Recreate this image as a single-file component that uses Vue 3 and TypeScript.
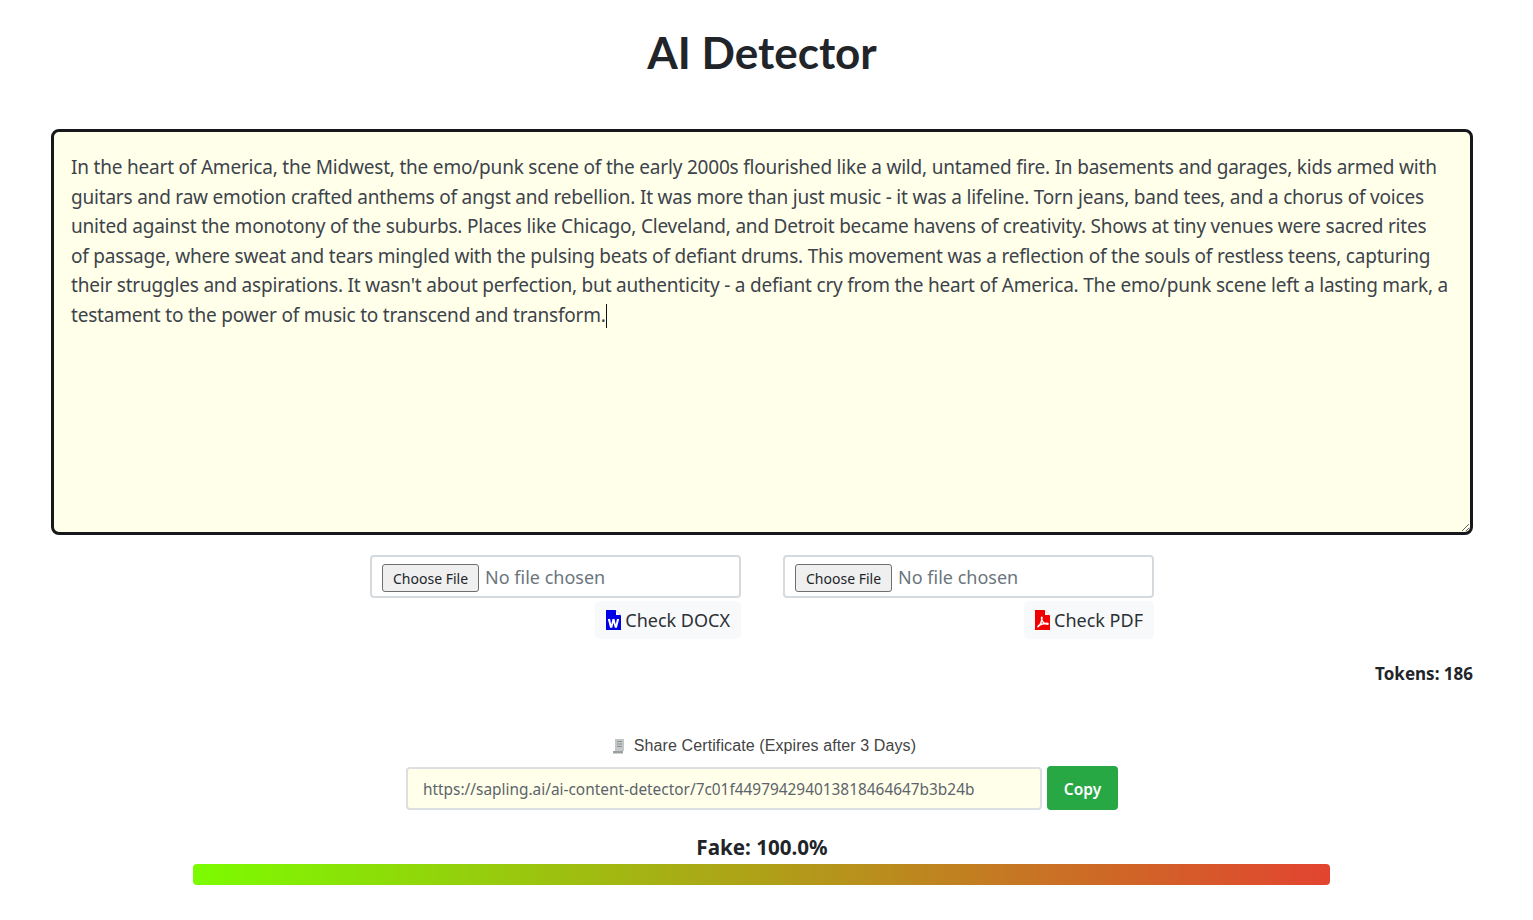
<script setup lang="ts">
const lines: string[] = [
  'In the heart of America, the Midwest, the emo/punk scene of the early 2000s flourished like a wild, untamed fire. In basements and garages, kids armed with',
  'guitars and raw emotion crafted anthems of angst and rebellion. It was more than just music - it was a lifeline. Torn jeans, band tees, and a chorus of voices',
  'united against the monotony of the suburbs. Places like Chicago, Cleveland, and Detroit became havens of creativity. Shows at tiny venues were sacred rites',
  'of passage, where sweat and tears mingled with the pulsing beats of defiant drums. This movement was a reflection of the souls of restless teens, capturing',
  "their struggles and aspirations. It wasn't about perfection, but authenticity - a defiant cry from the heart of America. The emo/punk scene left a lasting mark, a",
  'testament to the power of music to transcend and transform.'
]
const lastLine = lines.length - 1
const shareUrl = 'https://sapling.ai/ai-content-detector/7c01f449794294013818464647b3b24b'
</script>

<template>
  <div class="page">
    <h1 class="title">AI Detector</h1>

    <div class="editor">
      <div v-for="(line, i) in lines" :key="i" class="line">{{ line }}<span v-if="i === lastLine" class="caret"></span></div>
    </div>

    <div class="uploads">
      <div class="upload">
        <input class="file" type="file" />
        <button class="check" type="button">
          <svg class="icon" viewBox="0 0 15 20" width="15" height="20">
            <path d="M0 0H9.500L15 5.500V20H0Z" fill="#0000e6" />
            <path d="M10 0.500L14.500 5H10Z" fill="#fff" />
            <path d="M1.800 9H4.100L5.200 14.400L6.500 9H8.500L9.800 14.400L10.900 9H13.200L10.900 17.800H8.800L7.500 12.800L6.200 17.800H4.100Z" fill="#fff" />
          </svg>
          Check DOCX
        </button>
      </div>
      <div class="upload">
        <input class="file" type="file" />
        <button class="check" type="button">
          <svg class="icon" viewBox="0 0 15 20" width="15" height="20">
            <path d="M0 0H9.500L15 5.500V20H0Z" fill="#f00000" />
            <path d="M10 0.500L14.500 5H10Z" fill="#fff" />
            <path d="M2.400 17.200C4.600 16 6.600 12 7 8C7.200 7 6.400 7 6.500 8.400C6.800 11.600 9.400 14 12.600 14.200C13.400 14.200 13.200 13.200 12 13.200C9 13.200 5.400 14.200 3 16" fill="none" stroke="#fff" stroke-width="1.500" />
          </svg>
          Check PDF
        </button>
      </div>
    </div>

    <div class="tokens">Tokens: 186</div>

    <div class="share">
      <div class="share-label">
        <svg class="scroll" viewBox="0 0 14 16" width="14" height="16">
          <path d="M3 1H12V13H3Z" fill="#c3c7c7" />
          <path d="M5 3.500H10M5 6H10M5 8.500H10" stroke="#8b9090" stroke-width="1" />
          <path d="M1 13H11V15.500H1Z" fill="#9aa0a0" />
        </svg>
        Share Certificate (Expires after 3 Days)
      </div>
      <div class="share-row">
        <input class="url" type="text" readonly :value="shareUrl" />
        <button class="copy" type="button">Copy</button>
      </div>
    </div>

    <div class="score">
      <div class="score-label">Fake: 100.0%</div>
      <div class="bar"></div>
    </div>
  </div>
</template>

<style>
html,
body {
  margin: 0;
  background: #fff;
}
</style>

<style scoped>
.page {
  box-sizing: border-box;
  height: 920px;
  padding: 0 60px 0 51px;
  font-family: 'Noto Sans', sans-serif;
  color: #212529;
  overflow: hidden;
}

.title {
  margin: 0;
  padding-top: 25px;
  height: 129px;
  box-sizing: border-box;
  text-align: center;
  font-family: Lato, sans-serif;
  font-weight: 700;
  font-size: 44px;
  line-height: 54px;
}

.editor {
  box-sizing: border-box;
  height: 406px;
  padding: 21px 17px 0;
  border: 3px solid #16181b;
  border-radius: 8px;
  background: #ffffea;
  font-size: 19px;
  line-height: 29.6px;
  letter-spacing: -0.2px;
  color: #3d434a;
  resize: both;
  overflow: hidden;
}

.line {
  white-space: pre;
}

.caret {
  display: inline-block;
  width: 1px;
  height: 24px;
  vertical-align: -6px;
  background: #111;
}

.uploads {
  display: flex;
  justify-content: center;
  gap: 42px;
  margin-top: 20px;
}

.upload {
  display: flex;
  flex-direction: column;
  align-items: flex-end;
  width: 371px;
}

.file {
  box-sizing: border-box;
  width: 100%;
  height: 43px;
  padding: 7px 11px 9px 10px;
  border: 2px solid #d5dadf;
  border-radius: 4px;
  background: #fff;
  font-family: inherit;
  font-size: 18px;
  color: #6c757d;
}

.file::file-selector-button {
  height: 28px;
  margin-right: 6px;
  padding: 0 10px;
  border: 1px solid #6f6f6f;
  border-radius: 3px;
  background: #efefef;
  font-family: inherit;
  font-size: 14px;
  color: #212529;
}

.check {
  display: flex;
  align-items: center;
  gap: 4px;
  height: 38px;
  margin-top: 3px;
  padding: 0 11px;
  border: 0;
  border-radius: 5px;
  background: #f8f9fa;
  font-family: inherit;
  font-size: 18px;
  color: #2b3035;
}

.icon {
  flex: none;
}

.tokens {
  margin-top: 22px;
  text-align: right;
  font-size: 17px;
  line-height: 26px;
  font-weight: 700;
}

.share {
  margin-top: 47px;
}

.share-label {
  display: flex;
  justify-content: center;
  align-items: center;
  gap: 8px;
  height: 24px;
  padding-left: 4px;
  font-family: 'Liberation Sans', Arial, sans-serif;
  font-size: 16px;
  letter-spacing: 0.1px;
  color: #444;
}

.share-row {
  display: flex;
  justify-content: center;
  align-items: center;
  gap: 5px;
  margin-top: 8px;
}

.url {
  box-sizing: border-box;
  width: 636px;
  height: 43px;
  padding: 2px 15px 0;
  border: 2px solid #dcdfe2;
  border-radius: 4px;
  background: #ffffea;
  font-family: inherit;
  font-size: 15.4px;
  color: #5c636a;
  outline: none;
}

.copy {
  width: 71px;
  height: 44px;
  padding: 2px 0 0;
  border: 0;
  border-radius: 4px;
  background: #28a745;
  font-family: inherit;
  font-size: 15.5px;
  font-weight: 600;
  color: #fff;
}

.score {
  margin-top: 22px;
  text-align: center;
}

.score-label {
  font-size: 20.6px;
  line-height: 30px;
  font-weight: 700;
}

.bar {
  width: 1137px;
  height: 21px;
  margin: 2px 0 0 142px;
  border-radius: 4px;
  background: linear-gradient(90deg, #7cfc00, #e24430);
}
</style>
